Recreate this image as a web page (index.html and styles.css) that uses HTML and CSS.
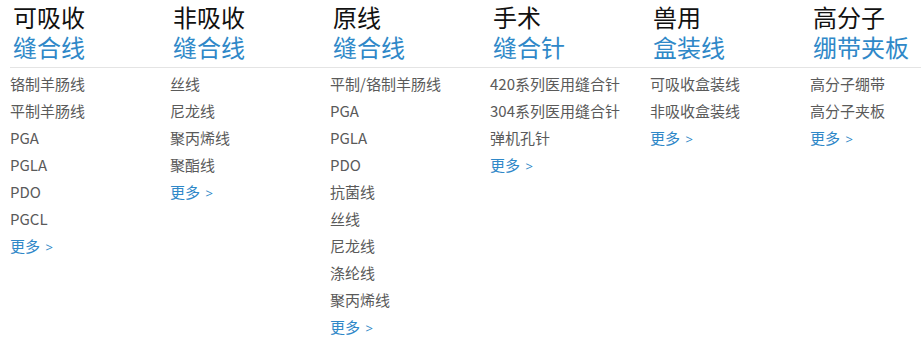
FILE: index.html
```html
<!DOCTYPE html>
<html lang="zh-CN">
<head>
<meta charset="utf-8">
<link rel="stylesheet" href="styles.css">
</head>
<body>
<div class="menu">
  <div class="heads">
    <div class="head"><div class="t1">可吸收</div><div class="t2">缝合线</div></div>
    <div class="head"><div class="t1">非吸收</div><div class="t2">缝合线</div></div>
    <div class="head"><div class="t1">原线</div><div class="t2">缝合线</div></div>
    <div class="head"><div class="t1">手术</div><div class="t2">缝合针</div></div>
    <div class="head"><div class="t1">兽用</div><div class="t2">盒装线</div></div>
    <div class="head"><div class="t1">高分子</div><div class="t2">绷带夹板</div></div>
  </div>
  <div class="lists">
    <ul class="col">
      <li>铬制羊肠线</li><li>平制羊肠线</li><li>PGA</li><li>PGLA</li><li>PDO</li><li>PGCL</li><li class="more">更多 <span class="gt">&gt;</span></li>
    </ul>
    <ul class="col">
      <li>丝线</li><li>尼龙线</li><li>聚丙烯线</li><li>聚酯线</li><li class="more">更多 <span class="gt">&gt;</span></li>
    </ul>
    <ul class="col">
      <li>平制/铬制羊肠线</li><li>PGA</li><li>PGLA</li><li>PDO</li><li>抗菌线</li><li>丝线</li><li>尼龙线</li><li>涤纶线</li><li>聚丙烯线</li><li class="more">更多 <span class="gt">&gt;</span></li>
    </ul>
    <ul class="col">
      <li>420系列医用缝合针</li><li>304系列医用缝合针</li><li>弹机孔针</li><li class="more">更多 <span class="gt">&gt;</span></li>
    </ul>
    <ul class="col">
      <li>可吸收盒装线</li><li>非吸收盒装线</li><li class="more">更多 <span class="gt">&gt;</span></li>
    </ul>
    <ul class="col">
      <li>高分子绷带</li><li>高分子夹板</li><li class="more">更多 <span class="gt">&gt;</span></li>
    </ul>
  </div>
</div>
</body>
</html>
```
FILE: styles.css
```css
html, body {
  margin: 0;
  padding: 0;
  background: #fff;
}
body {
  font-family: "Noto Sans CJK SC", "Open Sans", sans-serif;
}
.menu {
  padding-left: 10px;
  overflow: hidden;
}
.heads {
  display: grid;
  grid-template-columns: repeat(5, 160px) 1fr;
  padding-top: 2px;
  padding-bottom: 5px;
  border-bottom: 1px solid #e4e4e4;
}
.head {
  padding-left: 3px;
}
.t1 {
  font-size: 24px;
  line-height: 30px;
  color: #111;
}
.t2 {
  font-size: 24px;
  line-height: 30px;
  color: #2f88c8;
}
.lists {
  display: grid;
  grid-template-columns: repeat(5, 160px) 1fr;
  padding-top: 2px;
}
.col {
  list-style: none;
  margin: 0;
  padding: 0;
}
.col li {
  font-size: 15px;
  line-height: 27px;
  color: #5a5a5a;
}
.col li.more {
  color: #2f88c8;
}
.gt {
  font-family: "Open Sans", sans-serif;
  font-size: 13px;
  margin-left: 2px;
}
```
